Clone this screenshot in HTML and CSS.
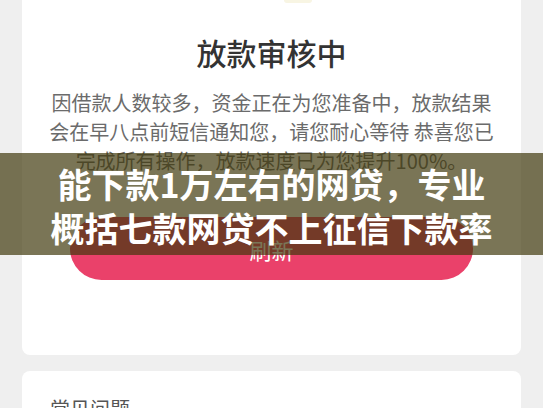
FILE: index.html
```html
<!DOCTYPE html>
<html lang="zh-CN">
<head>
    <meta charset="UTF-8">
    <meta name="viewport" content="width=device-width, initial-scale=1.0">
    <title>放款审核中</title>
    <link rel="stylesheet" href="styles.css">
</head>
<body>
    <div class="page">
        <div class="card status-card">
            <div class="status-icon"></div>
            <h1 class="status-title">放款审核中</h1>
            <p class="status-text">因借款人数较多，资金正在为您准备中，放款结果会在早八点前短信通知您，请您耐心等待 恭喜您已完成所有操作，放款速度已为您提升100%。</p>
            <button class="refresh-btn">刷新</button>
        </div>

        <div class="card faq-card">
            <span class="faq-title">常见问题</span>
            <svg class="chevron" width="10" height="16" viewBox="0 0 10 16">
                <path d="M2 2 L8 8 L2 14" fill="none" stroke="#bdbdbd" stroke-width="2"/>
            </svg>
        </div>
    </div>

    <div class="banner">
        能下款1万左右的网贷，专业<br>概括七款网贷不上征信下款率
    </div>
</body>
</html>
```

FILE: styles.css
```css
body {
    margin: 0;
    background-color: #efefef;
    font-family: "Noto Sans CJK SC", "Noto Sans", sans-serif;
    overflow: hidden;
}

.page {
    padding: 0 22px;
}

/* Cards */
.card {
    background-color: #fff;
    border-radius: 8px;
}

.status-card {
    margin-top: -12px;
    padding: 12px 24px 75px;
    text-align: center;
}

.status-icon {
    width: 28px;
    height: 3px;
    margin: 0 0 0 238px;
    background-color: #f8f5e3;
    border-radius: 0 0 10px 10px;
}

.status-title {
    margin: 29px 0 0;
    font-size: 30px;
    line-height: 40px;
    font-weight: 500;
    color: #333;
}

.status-text {
    margin: 16px 0 0;
    font-size: 20px;
    line-height: 29px;
    color: #6b6b6b;
}

/* Button */
.refresh-btn {
    display: block;
    width: 403px;
    height: 63px;
    margin: 42px auto 0;
    border: none;
    border-radius: 32px;
    background-color: #ea416a;
    color: #fff;
    font-family: inherit;
    font-size: 22px;
}

/* FAQ */
.faq-card {
    margin-top: 16px;
    padding: 23px 26px 30px 28px;
    display: flex;
    justify-content: space-between;
    align-items: center;
}

.faq-title {
    font-size: 20px;
    line-height: 30px;
    color: #555;
}

.chevron {
    margin-top: 12px;
}

/* Banner over the page */
.banner {
    position: absolute;
    top: 153px;
    left: 0;
    right: 0;
    height: 102px;
    box-sizing: border-box;
    padding-top: 9px;
    background-color: rgba(62, 55, 10, 0.69);
    color: #fff;
    font-size: 34px;
    line-height: 44px;
    font-weight: 700;
    text-align: center;
}
```
